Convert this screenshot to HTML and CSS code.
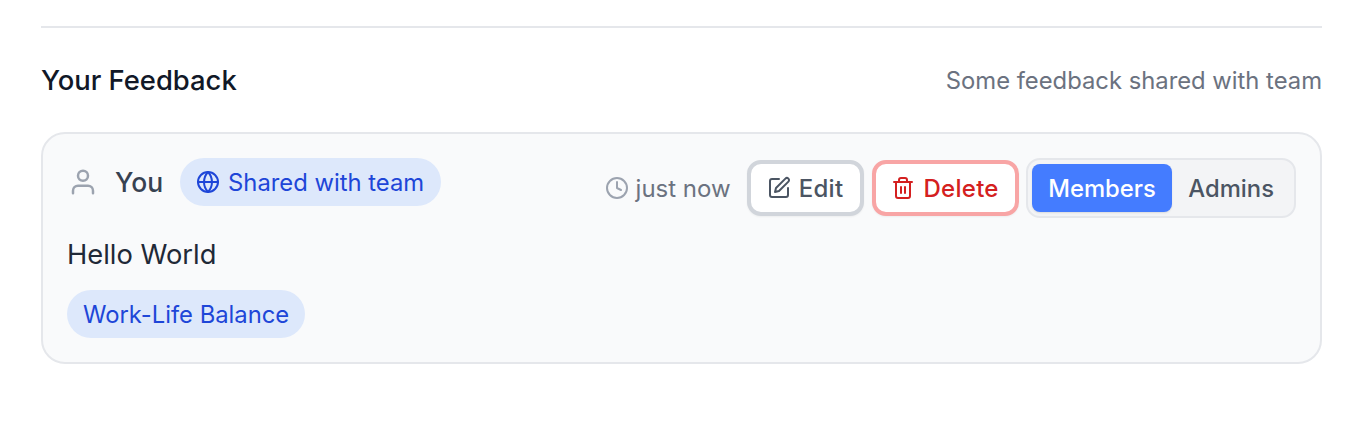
FILE: index.html
```html
<!DOCTYPE html>
<html lang="en">
<head>
  <meta charset="UTF-8">
  <meta name="viewport" content="width=device-width, initial-scale=1.0">
  <title>Your Feedback</title>
  <link rel="stylesheet" href="styles.css">
</head>
<body>
  <section class="feedback">
    <div class="section-head">
      <h2>Your Feedback</h2>
      <p>Some feedback shared with team</p>
    </div>

    <div class="card">
      <div class="card-top">
        <div class="author">
          <svg class="icon-user" viewBox="0 0 24 24" fill="none" stroke="currentColor" stroke-width="2" stroke-linecap="round" stroke-linejoin="round">
            <circle cx="12" cy="7" r="4"/>
            <path d="M20 21v-2a4 4 0 0 0-4-4H8a4 4 0 0 0-4 4v2"/>
          </svg>
          <span class="author-name">You</span>
          <span class="pill shared">
            <svg class="icon-globe" viewBox="0 0 24 24" fill="none" stroke="currentColor" stroke-width="2" stroke-linecap="round" stroke-linejoin="round">
              <circle cx="12" cy="12" r="10"/>
              <path d="M2 12h20"/>
              <path d="M12 2a15 15 0 0 1 4 10 15 15 0 0 1-4 10 15 15 0 0 1-4-10 15 15 0 0 1 4-10Z"/>
            </svg>
            Shared with team
          </span>
        </div>

        <div class="actions">
          <span class="time">
            <svg class="icon-clock" viewBox="0 0 24 24" fill="none" stroke="currentColor" stroke-width="2" stroke-linecap="round" stroke-linejoin="round">
              <circle cx="12" cy="12" r="10"/>
              <path d="M12 6v6l4 2"/>
            </svg>
            just now
          </span>
          <button class="btn btn-edit">
            <svg viewBox="0 0 24 24" fill="none" stroke="currentColor" stroke-width="2" stroke-linecap="round" stroke-linejoin="round">
              <path d="M12 3H5a2 2 0 0 0-2 2v14a2 2 0 0 0 2 2h14a2 2 0 0 0 2-2v-7"/>
              <path d="M18.4 2.6a2.1 2.1 0 0 1 3 3L12 15l-4 1 1-4Z"/>
            </svg>
            Edit
          </button>
          <button class="btn btn-delete">
            <svg viewBox="0 0 24 24" fill="none" stroke="currentColor" stroke-width="2" stroke-linecap="round" stroke-linejoin="round">
              <path d="M3 6h18"/>
              <path d="M19 6v14a2 2 0 0 1-2 2H7a2 2 0 0 1-2-2V6"/>
              <path d="M8 6V4a2 2 0 0 1 2-2h4a2 2 0 0 1 2 2v2"/>
              <path d="M10 11v6"/>
              <path d="M14 11v6"/>
            </svg>
            Delete
          </button>
          <div class="toggle">
            <button class="toggle-item active">Members</button>
            <button class="toggle-item">Admins</button>
          </div>
        </div>
      </div>

      <p class="message">Hello World</p>
      <span class="pill tag">Work-Life Balance</span>
    </div>
  </section>
</body>
</html>
```

FILE: styles.css
```css
body {
  font-family: Inter, "Liberation Sans", sans-serif;
  background-color: #fff;
  margin: 0;
  padding: 0;
}
.feedback {
  margin: 26px 42px 0 41px;
  padding-top: 32px;
  border-top: 2px solid #e5e7eb;
}
.section-head {
  display: flex;
  align-items: center;
  justify-content: space-between;
  height: 40px;
  margin-bottom: 32px;
}
.section-head h2 {
  margin: 0;
  font-size: 27.4px;
  font-weight: 500;
  color: #111827;
}
.section-head p {
  margin: 0;
  font-size: 23.8px;
  color: #6b7280;
}
.card {
  background-color: #f9fafb;
  border: 2px solid #e5e7eb;
  border-radius: 24px;
  padding: 24px;
}
.card-top {
  display: flex;
  align-items: flex-start;
  justify-content: space-between;
}
.author {
  display: flex;
  align-items: center;
  height: 48px;
}
.icon-user {
  width: 30px;
  height: 30px;
  color: #9ca3af;
  margin: 0 17px 0 1px;
}
.author-name {
  font-size: 26.5px;
  font-weight: 500;
  color: #374151;
  margin-right: 17px;
}
.pill {
  display: inline-flex;
  align-items: center;
  height: 48px;
  padding: 0 16px;
  box-sizing: border-box;
  border-radius: 24px;
  background-color: #dde8fb;
  color: #1e46d8;
  font-size: 23.8px;
}
.shared {
  padding-right: 17px;
}
.icon-globe {
  width: 24px;
  height: 24px;
  margin-right: 8px;
}
.actions {
  display: flex;
  align-items: center;
  height: 60px;
}
.time {
  display: flex;
  align-items: center;
  font-size: 24px;
  color: #6b7280;
  margin-right: 16px;
}
.icon-clock {
  width: 24px;
  height: 24px;
  color: #9ca3af;
  margin-right: 7px;
}
.btn {
  display: flex;
  align-items: center;
  height: 56px;
  box-sizing: border-box;
  background-color: #fff;
  border-radius: 14px;
  border: 4px solid;
  font-family: inherit;
  font-size: 24px;
  font-weight: 500;
  letter-spacing: 0.3px;
  cursor: pointer;
  box-shadow: 0 1px 2px rgba(0,0,0,0.05);
}
.btn svg {
  width: 24px;
  height: 24px;
  margin-right: 8px;
}
.btn-edit {
  border-color: #d1d5db;
  color: #4b5563;
  padding: 0 17px 0 16px;
  margin-right: 8px;
}
.btn-delete {
  border-color: #f8a5a5;
  color: #d42020;
  padding: 0 16px 0 15px;
  margin-right: 7px;
}
.toggle {
  display: flex;
  height: 60px;
  box-sizing: border-box;
  padding: 4px;
  background-color: #f3f4f6;
  border: 2px solid #e5e7eb;
  border-radius: 14px;
}
.toggle-item {
  border: none;
  background: none;
  font-family: inherit;
  font-size: 23.8px;
  font-weight: 500;
  color: #4b5563;
  padding: 0 16px;
  border-radius: 8px;
  cursor: pointer;
}
.toggle-item.active {
  padding: 0 16.5px;
  background-color: #447cff;
  color: #fff;
  box-shadow: 0 1px 2px rgba(0,0,0,0.1);
}
.message {
  margin: 19px 0 17px;
  font-size: 27.3px;
  line-height: 36px;
  color: #1f2937;
}
```
